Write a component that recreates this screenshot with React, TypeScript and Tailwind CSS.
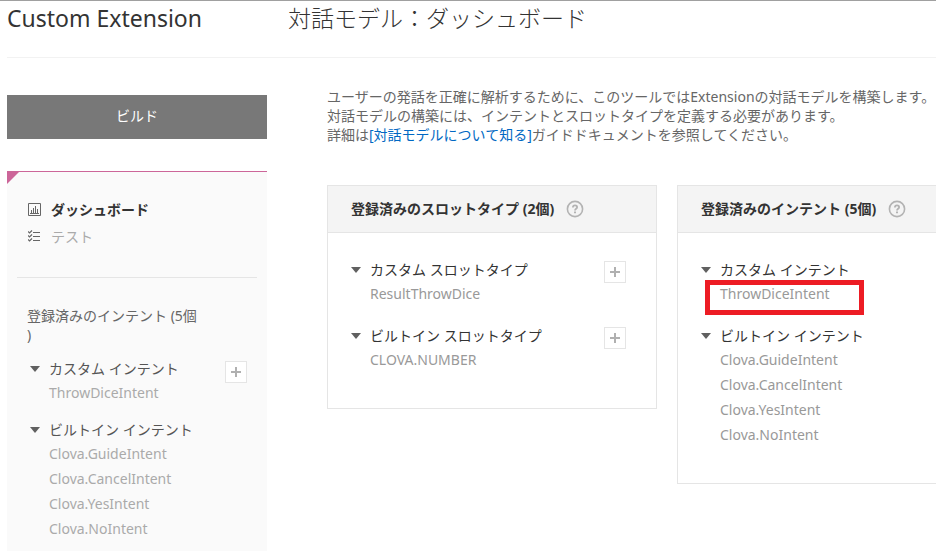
import React, { useState } from "react";

const jp = "font-['Noto_Sans','Noto_Sans_CJK_JP',sans-serif]";

function PlusButton({ label }: { label: string }) {
  return (
    <button
      type="button"
      aria-label={label}
      className="mt-1 flex size-[22px] shrink-0 items-center justify-center border border-[#e5e5e5] bg-white"
    >
      <svg width="10" height="10" viewBox="0 0 10 10" fill="none" stroke="#b0b0b0" strokeWidth="2" aria-hidden="true">
        <path d="M5 0v10M0 5h10" />
      </svg>
    </button>
  );
}

function HelpButton({ label }: { label: string }) {
  return (
    <button type="button" aria-label={label} className="shrink-0">
      <svg width="18" height="18" viewBox="0 0 18 18" fill="none" stroke="#b3b3b3" aria-hidden="true">
        <circle cx="9" cy="9" r="7.6" strokeWidth="1.6" />
        <path d="M6.9 7.4c0-1.3.9-2 2.1-2s2.1.7 2.1 1.8c0 1.5-2.1 1.5-2.1 3.2" strokeWidth="1.8" />
        <path d="M9 11.4v1.8" strokeWidth="2" />
      </svg>
    </button>
  );
}

type Group = { title: string; items: string[]; addLabel?: string; marked?: boolean };

function IntentGroup({ group, compact = false }: { group: Group; compact?: boolean }) {
  const [open, setOpen] = useState(true);
  return (
    <section className="flex items-start justify-between">
      <div>
        <button
          type="button"
          aria-expanded={open}
          onClick={() => setOpen(!open)}
          className={
            compact
              ? "flex h-6 items-center gap-[9px] text-[#555]"
              : "flex h-[25px] items-center gap-[9px] text-[#333]"
          }
        >
          <svg width="10" height="6" viewBox="0 0 10 6" fill="#606060" aria-hidden="true">
            <path d="M0 0h10L5 6z" />
          </svg>
          <span>{group.title}</span>
        </button>
        {open && (
          <ul className="pl-[19px]">
            {group.items.map((item) => (
              <li key={item} className="relative h-[25px] leading-6">
                <a href="#" className={compact ? "text-[#aaa]" : "text-[#999]"}>
                  {item}
                </a>
                {group.marked && (
                  <span className="pointer-events-none absolute -left-[15px] -top-[2px] h-[35px] w-[159px] border-5 border-[#ed1c24]" />
                )}
              </li>
            ))}
          </ul>
        )}
      </div>
      {group.addLabel && <PlusButton label={group.addLabel} />}
    </section>
  );
}

const builtInIntents = ["Clova.GuideIntent", "Clova.CancelIntent", "Clova.YesIntent", "Clova.NoIntent"];

const sidebarGroups: Group[] = [
  { title: "カスタム インテント", items: ["ThrowDiceIntent"], addLabel: "インテントを追加" },
  { title: "ビルトイン インテント", items: builtInIntents },
];

const slotGroups: Group[] = [
  { title: "カスタム スロットタイプ", items: ["ResultThrowDice"], addLabel: "カスタム スロットタイプを追加" },
  { title: "ビルトイン スロットタイプ", items: ["CLOVA.NUMBER"], addLabel: "ビルトイン スロットタイプを追加" },
];

const intentGroups: Group[] = [
  { title: "カスタム インテント", items: ["ThrowDiceIntent"], marked: true },
  { title: "ビルトイン インテント", items: builtInIntents },
];

function Panel({ title, groups, className }: { title: string; groups: Group[]; className: string }) {
  return (
    <section className={`border-[#e5e5e5] ${className}`}>
      <header className="flex h-[47px] items-center gap-3 border-b border-[#e5e5e5] bg-[#f4f4f4] px-[23px]">
        <h2 className="font-bold text-[#333]">{title}</h2>
        <HelpButton label={`${title} ヘルプ`} />
      </header>
      <div className="flex flex-col gap-4 pt-6 pr-[30px] pb-[35px] pl-[23px]">
        {groups.map((g) => (
          <IntentGroup key={g.title} group={g} />
        ))}
      </div>
    </section>
  );
}

export default function App() {
  return (
    <div className={`min-h-screen overflow-hidden border-t border-[#a0a0a0] bg-white pl-[7px] text-sm ${jp}`}>
      <header className="flex h-[57px] border-b border-[#f2f2f2] text-[23px] leading-[34px] text-[#333]">
        <p className="w-[281px] shrink-0">Custom Extension</p>
        <h1 className="whitespace-nowrap font-light">対話モデル：ダッシュボード</h1>
      </header>

      <div className="flex items-start gap-[60px]">
        <aside className="w-[260px] shrink-0 pt-[37px]">
          <button type="button" className="h-11 w-full bg-[#787878] pb-[2px] text-white">
            ビルド
          </button>

          <div className="relative mt-8 min-h-[380px] border-t border-[#cc6699] bg-[#fafafa] px-[10px] pb-4">
            <svg className="absolute left-0 top-0" width="12" height="12" viewBox="0 0 12 12" fill="#cc6699" aria-hidden="true">
              <path d="M0 0h12L0 12z" />
            </svg>
            <nav className="flex h-[106px] flex-col border-b border-[#e5e5e5] px-[11px] pt-6 leading-[27px]">
              <a href="#" className="flex items-center gap-[10px] font-bold text-[#333]">
                <svg width="13" height="13" viewBox="0 0 13 13" fill="none" stroke="#666" aria-hidden="true">
                  <path d="M.5.5h12v12H.5zM2 10.5h9M3.5 7v3M5.5 5v5M7.5 3v7M9.5 6v4" />
                </svg>
                ダッシュボード
              </a>
              <a href="#" className="flex items-center gap-[10px] text-[#aaa]">
                <svg width="13" height="13" viewBox="0 0 13 13" fill="none" stroke="#666" aria-hidden="true">
                  <path d="M5 2.5h7M5 6.5h7M5 10.5h7" />
                  <path d="M0 1.5l1.5 1.5L4 .5M0 5.5L1.5 7 4 4.5M0 9.5l1.5 1.5L4 8.5" strokeWidth="1.2" />
                </svg>
                テスト
              </a>
            </nav>
            <div className="px-[10px] pt-7">
              <h2 className="leading-[19px] text-[#666]">
                登録済みのインテント (5個
                <br />)
              </h2>
              <div className="flex flex-col gap-3 pt-[13px] pl-[3px]">
                {sidebarGroups.map((g) => (
                  <IntentGroup key={g.title} group={g} compact />
                ))}
              </div>
            </div>
          </div>
        </aside>

        <main className="min-w-0 flex-1 pt-[29px]">
          <p className="whitespace-nowrap leading-[19px] text-[#666]">
            ユーザーの発話を正確に解析するために、このツールではExtensionの対話モデルを構築します。
            <br />
            対話モデルの構築には、インテントとスロットタイプを定義する必要があります。
            <br />
            詳細は
            <a href="#" className="text-[#0068c3]">
              [対話モデルについて知る]
            </a>
            ガイドドキュメントを参照してください。
          </p>
          <div className="flex items-start gap-5 pt-[41px]">
            <Panel title="登録済みのスロットタイプ (2個)" groups={slotGroups} className="w-[330px] shrink-0 border" />
            <Panel title="登録済みのインテント (5個)" groups={intentGroups} className="min-w-0 flex-1 border border-r-0" />
          </div>
        </main>
      </div>
    </div>
  );
}
